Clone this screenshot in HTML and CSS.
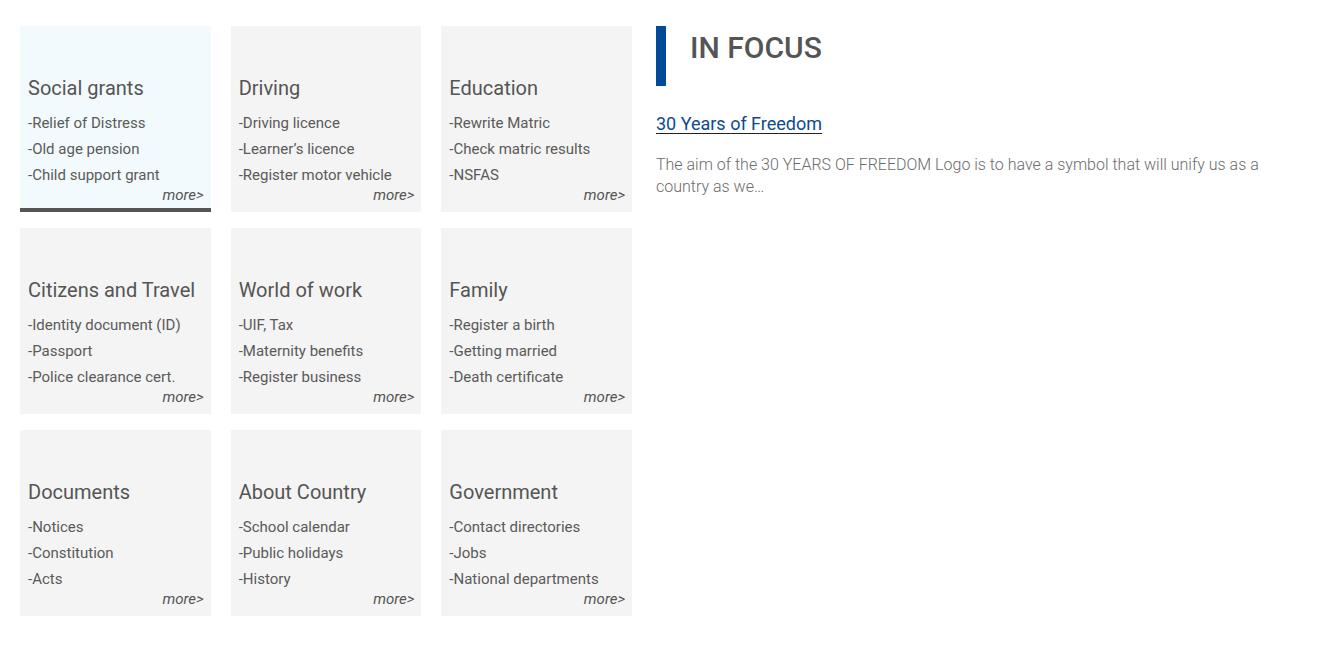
FILE: index.html
```html
<!DOCTYPE html>
<html lang="en">
<head>
<meta charset="utf-8">
<title>Services</title>
<link rel="stylesheet" href="styles.css">
</head>
<body>
<div class="page">
  <div class="grid">
    <div class="card active">
      <h3 class="card-title">Social grants</h3>
      <ul class="items"><li>-Relief of Distress</li><li>-Old age pension</li><li>-Child support grant</li></ul>
      <a class="more">more&gt;</a>
    </div>
    <div class="card">
      <h3 class="card-title">Driving</h3>
      <ul class="items"><li>-Driving licence</li><li>-Learner’s licence</li><li>-Register motor vehicle</li></ul>
      <a class="more">more&gt;</a>
    </div>
    <div class="card">
      <h3 class="card-title">Education</h3>
      <ul class="items"><li>-Rewrite Matric</li><li>-Check matric results</li><li>-NSFAS</li></ul>
      <a class="more">more&gt;</a>
    </div>
    <div class="card">
      <h3 class="card-title">Citizens and Travel</h3>
      <ul class="items"><li>-Identity document (ID)</li><li>-Passport</li><li>-Police clearance cert.</li></ul>
      <a class="more">more&gt;</a>
    </div>
    <div class="card">
      <h3 class="card-title">World of work</h3>
      <ul class="items"><li>-UIF, Tax</li><li>-Maternity benefits</li><li>-Register business</li></ul>
      <a class="more">more&gt;</a>
    </div>
    <div class="card">
      <h3 class="card-title">Family</h3>
      <ul class="items"><li>-Register a birth</li><li>-Getting married</li><li>-Death certificate</li></ul>
      <a class="more">more&gt;</a>
    </div>
    <div class="card">
      <h3 class="card-title">Documents</h3>
      <ul class="items"><li>-Notices</li><li>-Constitution</li><li>-Acts</li></ul>
      <a class="more">more&gt;</a>
    </div>
    <div class="card">
      <h3 class="card-title">About Country</h3>
      <ul class="items"><li>-School calendar</li><li>-Public holidays</li><li>-History</li></ul>
      <a class="more">more&gt;</a>
    </div>
    <div class="card">
      <h3 class="card-title">Government</h3>
      <ul class="items"><li>-Contact directories</li><li>-Jobs</li><li>-National departments</li></ul>
      <a class="more">more&gt;</a>
    </div>
  </div>
  <section class="focus">
    <div class="focus-head">
      <span class="bar"></span>
      <h2 class="focus-title">IN FOCUS</h2>
    </div>
    <a class="focus-link" href="#">30 Years of Freedom</a>
    <p class="focus-text">The aim of the 30 YEARS OF FREEDOM Logo is to have a symbol that will unify us as a country as we…</p>
  </section>
</div>
</body>
</html>
```

FILE: styles.css
```css
* { box-sizing: border-box; }
body {
  margin: 0;
  background: #fff;
  font-family: Roboto, "Liberation Sans", sans-serif;
  color: #555;
}
.page {
  display: flex;
  align-items: flex-start;
  padding: 26px 0 0 20px;
  gap: 24px;
}
.grid {
  width: 612px;
  display: grid;
  grid-template-columns: repeat(3, 1fr);
  column-gap: 20px;
  row-gap: 16px;
}
.card {
  height: 186px;
  background: #f4f4f4;
  padding: 50px 7px 0 8px;
  display: flex;
  flex-direction: column;
}
.card.active {
  background: #f2fafd;
  border-bottom: 4px solid #555;
}
.card-title {
  margin: 0;
  font-size: 20px;
  line-height: 24px;
  font-weight: 400;
  color: #555;
  white-space: nowrap;
}
.items {
  list-style: none;
  margin: 10px 0 0;
  padding: 0;
  font-size: 15px;
  line-height: 26px;
  color: #5a5a5a;
  white-space: nowrap;
}
.more {
  align-self: flex-end;
  margin-top: -1px;
  font-size: 15px;
  line-height: 16px;
  font-style: italic;
  color: #555;
}
.focus {
  width: 620px;
}
.focus-head {
  display: flex;
  align-items: flex-start;
  gap: 24px;
  height: 60px;
}
.bar {
  width: 10px;
  height: 60px;
  background: #004b97;
}
.focus-title {
  margin: 4px 0 0;
  font-size: 30px;
  line-height: 36px;
  font-weight: 500;
  color: #555;
}
.focus-link {
  display: inline-block;
  margin-top: 28px;
  font-size: 18px;
  line-height: 20px;
  color: #0b4a91;
  text-decoration: underline;
  text-decoration-color: #222;
  text-underline-offset: 3px;
}
.focus-text {
  margin: 20px 0 0;
  font-size: 16px;
  line-height: 22px;
  font-weight: 300;
  color: #6b6b6b;
}
```
